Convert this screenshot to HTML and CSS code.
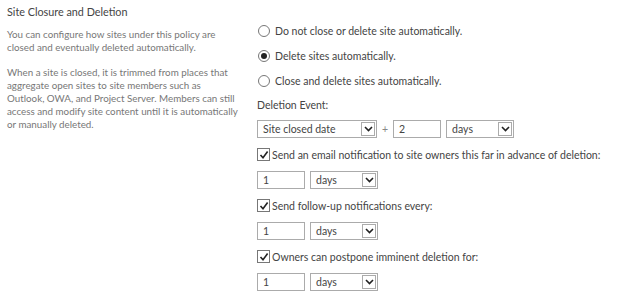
FILE: index.html
```html
<!DOCTYPE html>
<html lang="en">
<head>
    <meta charset="UTF-8">
    <title>Site Closure and Deletion</title>
    <link rel="stylesheet" href="styles.css">
</head>
<body>
    <div class="section">
        <div class="info">
            <h3 class="title">Site Closure and Deletion</h3>
            <p class="desc">You can configure how sites under this policy are<br>closed and eventually deleted automatically.</p>
            <p class="desc">When a site is closed, it is trimmed from places that<br>aggregate open sites to site members such as<br>Outlook, OWA, and Project Server. Members can still<br>access and modify site content until it is automatically<br>or manually deleted.</p>
        </div>
        <div class="fields">
            <div class="radios">
                <label class="radio"><span class="dot"></span>Do not close or delete site automatically.</label>
                <label class="radio"><span class="dot on"></span>Delete sites automatically.</label>
                <label class="radio"><span class="dot"></span>Close and delete sites automatically.</label>
            </div>

            <div class="label">Deletion Event:</div>
            <div class="row">
                <div class="select wide"><span class="val">Site closed date</span><span class="arrow"><svg width="9" height="6" viewBox="0 0 9 6"><path d="M1 1 L4.5 4.5 L8 1" fill="none" stroke="#222" stroke-width="1.6"/></svg></span></div>
                <span class="plus">+</span>
                <div class="input">2</div>
                <div class="select"><span class="val">days</span><span class="arrow"><svg width="9" height="6" viewBox="0 0 9 6"><path d="M1 1 L4.5 4.5 L8 1" fill="none" stroke="#222" stroke-width="1.6"/></svg></span></div>
            </div>

            <label class="check"><span class="box"><svg width="10" height="10" viewBox="0 0 10 10"><path d="M1.5 5 L4 7.8 L8.6 1.6" fill="none" stroke="#222" stroke-width="1.6"/></svg></span>Send an email notification to site owners this far in advance of deletion:</label>
            <div class="row">
                <div class="input">1</div>
                <div class="select"><span class="val">days</span><span class="arrow"><svg width="9" height="6" viewBox="0 0 9 6"><path d="M1 1 L4.5 4.5 L8 1" fill="none" stroke="#222" stroke-width="1.6"/></svg></span></div>
            </div>

            <label class="check"><span class="box"><svg width="10" height="10" viewBox="0 0 10 10"><path d="M1.5 5 L4 7.8 L8.6 1.6" fill="none" stroke="#222" stroke-width="1.6"/></svg></span>Send follow-up notifications every:</label>
            <div class="row">
                <div class="input">1</div>
                <div class="select"><span class="val">days</span><span class="arrow"><svg width="9" height="6" viewBox="0 0 9 6"><path d="M1 1 L4.5 4.5 L8 1" fill="none" stroke="#222" stroke-width="1.6"/></svg></span></div>
            </div>

            <label class="check"><span class="box"><svg width="10" height="10" viewBox="0 0 10 10"><path d="M1.5 5 L4 7.8 L8.6 1.6" fill="none" stroke="#222" stroke-width="1.6"/></svg></span>Owners can postpone imminent deletion for:</label>
            <div class="row">
                <div class="input">1</div>
                <div class="select"><span class="val">days</span><span class="arrow"><svg width="9" height="6" viewBox="0 0 9 6"><path d="M1 1 L4.5 4.5 L8 1" fill="none" stroke="#222" stroke-width="1.6"/></svg></span></div>
            </div>
        </div>
    </div>
</body>
</html>
```

FILE: styles.css
```css
body {
    margin: 0;
    background-color: #fff;
    font-family: Lato, sans-serif;
    color: #444;
}
.section {
    display: flex;
}
.info {
    width: 238px;
    flex-shrink: 0;
    padding: 4px 0 0 7px;
    margin-right: 12px;
    white-space: nowrap;
}
.title {
    margin: 0 0 8px;
    font-size: 10.8px;
    font-weight: normal;
    line-height: 16px;
    color: #444;
}
.desc {
    margin: 0 0 12px;
    font-size: 9.8px;
    line-height: 13px;
    color: #777;
}
.fields {
    padding-top: 22px;
    font-size: 10.5px;
    display: flex;
    flex-direction: column;
    white-space: nowrap;
}
.radios {
    display: flex;
    flex-direction: column;
    gap: 8px;
    margin-bottom: 8px;
}
.radio {
    display: flex;
    align-items: center;
    height: 17px;
    padding-left: 1px;
}
.dot {
    width: 10px;
    height: 10px;
    border: 1px solid #777;
    border-radius: 50%;
    margin-right: 5px;
    position: relative;
}
.dot.on::after {
    content: "";
    position: absolute;
    left: 2px;
    top: 2px;
    width: 6px;
    height: 6px;
    border-radius: 50%;
    background: #222;
}
.label {
    height: 17px;
    line-height: 17px;
    margin-bottom: 6px;
}
.row {
    display: flex;
    align-items: center;
    gap: 5px;
    margin-bottom: 8px;
}
.input, .select {
    height: 16px;
    border: 1px solid #ababab;
    line-height: 16px;
    padding-left: 5px;
    box-sizing: content-box;
}
.input {
    width: 41px;
}
.select {
    width: 61px;
    display: flex;
    justify-content: space-between;
}
.select.wide {
    width: 113px;
}
.arrow {
    width: 14px;
    height: 14px;
    margin: 0 1px;
    border: 1px solid #ababab;
    box-sizing: border-box;
    display: flex;
    align-items: center;
    justify-content: center;
    align-self: center;
}
.plus {
    color: #888;
}
.check {
    display: flex;
    align-items: center;
    height: 17px;
    margin-bottom: 8px;
}
.box {
    width: 11px;
    height: 11px;
    border: 1px solid #777;
    margin-right: 2px;
    display: flex;
    align-items: center;
    justify-content: center;
}
```
